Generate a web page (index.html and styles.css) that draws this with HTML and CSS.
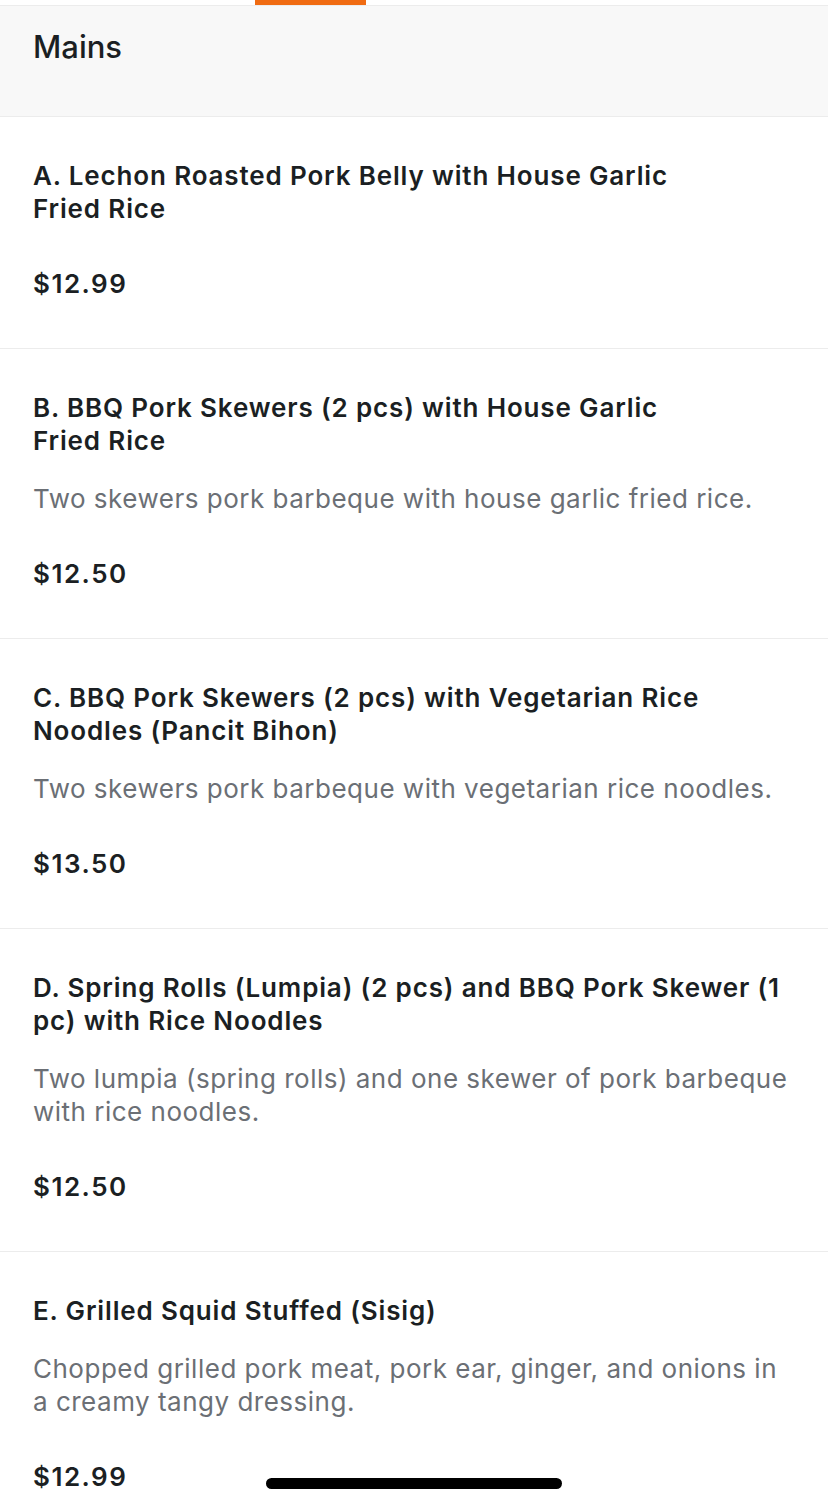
FILE: index.html
```html
<!DOCTYPE html>
<html>
  <head>
    <title>Mains</title>
    <link rel="stylesheet" href="styles.css">
  </head>
  <body>
    <div class="tabs">
      <span class="tab-active"></span>
    </div>

    <div class="section-head">
      <h2>Mains</h2>
    </div>

    <ul class="menu">
      <li class="item">
        <div class="name">A. Lechon Roasted Pork Belly with House Garlic<br>Fried Rice</div>
        <div class="price">$12.99</div>
      </li>
      <li class="item">
        <div class="name">B. BBQ Pork Skewers (2 pcs) with House Garlic<br>Fried Rice</div>
        <div class="desc">Two skewers pork barbeque with house garlic fried rice.</div>
        <div class="price">$12.50</div>
      </li>
      <li class="item">
        <div class="name">C. BBQ Pork Skewers (2 pcs) with Vegetarian Rice<br>Noodles (Pancit Bihon)</div>
        <div class="desc">Two skewers pork barbeque with vegetarian rice noodles.</div>
        <div class="price">$13.50</div>
      </li>
      <li class="item">
        <div class="name">D. Spring Rolls (Lumpia) (2 pcs) and BBQ Pork Skewer (1<br>pc) with Rice Noodles</div>
        <div class="desc">Two lumpia (spring rolls) and one skewer of pork barbeque<br>with rice noodles.</div>
        <div class="price">$12.50</div>
      </li>
      <li class="item">
        <div class="name">E. Grilled Squid Stuffed (Sisig)</div>
        <div class="desc">Chopped grilled pork meat, pork ear, ginger, and onions in<br>a creamy tangy dressing.</div>
        <div class="price">$12.99</div>
      </li>
    </ul>

    <div class="home-bar"></div>
  </body>
</html>
```

FILE: styles.css
```css
body {
  margin: 0;
  background: #fff;
  font-family: Inter, "Noto Sans", sans-serif;
  color: #1b1f23;
}
.tabs {
  height: 5px;
  border-bottom: 1px solid #ececec;
  background: #fff;
}
.tab-active {
  display: block;
  margin-left: 255px;
  width: 111px;
  height: 5px;
  background: #f06b12;
}
.section-head {
  height: 111px;
  background: #f8f8f8;
  border-bottom: 1px solid #ececec;
  padding: 0 33px;
  box-sizing: border-box;
}
.section-head h2 {
  margin: 0;
  padding-top: 21px;
  font-size: 31px;
  line-height: 40px;
  font-weight: 500;
}
.menu {
  margin: 0;
  padding: 0;
  list-style: none;
}
.item {
  display: flex;
  flex-direction: column;
  padding: 42px 33px 48px;
  border-bottom: 1px solid #ececec;
}
.name {
  font-size: 26px;
  line-height: 33px;
  font-weight: 600;
  letter-spacing: 0.85px;
}
.desc {
  margin-top: 25px;
  font-size: 26px;
  line-height: 33px;
  color: #6b6f75;
  letter-spacing: 0.5px;
}
.price {
  margin-top: 42px;
  font-size: 26px;
  line-height: 33px;
  font-weight: 600;
  letter-spacing: 1.5px;
}
.home-bar {
  position: fixed;
  left: 266px;
  top: 1478px;
  width: 296px;
  height: 11px;
  border-radius: 6px;
  background: #000;
}
```
